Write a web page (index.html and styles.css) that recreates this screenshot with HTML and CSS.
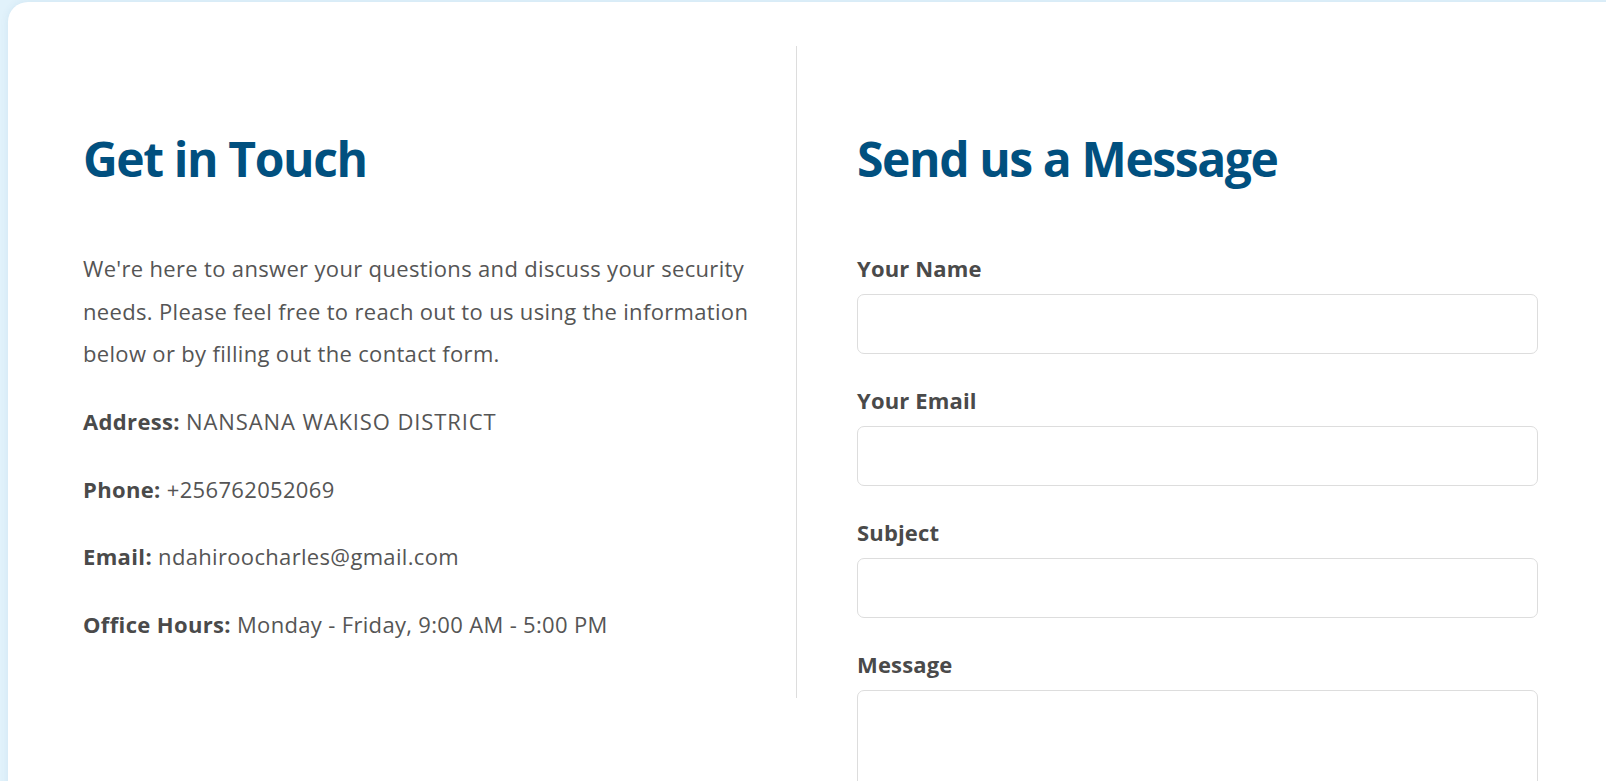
FILE: index.html
```html
<!DOCTYPE html>
<html lang="en">
<head>
<meta charset="utf-8">
<title>Contact Us</title>
<link rel="stylesheet" href="styles.css">
</head>
<body>
<section class="contact-card">
  <div class="contact-info">
    <h2 class="section-title">Get in Touch</h2>
    <p class="intro">We're here to answer your questions and discuss your security needs. Please feel free to reach out to us using the information below or by filling out the contact form.</p>
    <p class="info-line"><strong>Address:</strong> <span class="caps">NANSANA WAKISO DISTRICT</span></p>
    <p class="info-line"><strong>Phone:</strong> +256762052069</p>
    <p class="info-line"><strong>Email:</strong> ndahiroocharles@gmail.com</p>
    <p class="info-line"><strong>Office Hours:</strong> Monday - Friday, 9:00 AM - 5:00 PM</p>
  </div>
  <div class="contact-form">
    <h2 class="section-title form-title">Send us a Message</h2>
    <form class="form">
      <div class="form-group">
        <label class="form-label" for="name">Your Name</label>
        <input class="form-input" id="name" type="text">
      </div>
      <div class="form-group">
        <label class="form-label" for="email">Your Email</label>
        <input class="form-input" id="email" type="email">
      </div>
      <div class="form-group">
        <label class="form-label" for="subject">Subject</label>
        <input class="form-input" id="subject" type="text">
      </div>
      <div class="form-group">
        <label class="form-label" for="message">Message</label>
        <textarea class="form-input form-textarea" id="message"></textarea>
      </div>
    </form>
  </div>
</section>
</body>
</html>
```
FILE: styles.css
```css
html {
  overflow: hidden;
}
body {
  margin: 0;
  background: #e1f2fb;
  font-family: "Open Sans", "Noto Sans", sans-serif;
  color: #555555;
}
.contact-card {
  display: flex;
  align-items: flex-start;
  box-sizing: border-box;
  width: 1640px;
  min-height: 900px;
  margin: 2px 0 0 8px;
  padding: 44px 0 0 75px;
  background: #ffffff;
  border-radius: 20px;
  box-shadow: 0 0 8px rgba(0, 90, 140, 0.08);
}
.contact-info {
  flex: 0 0 714px;
  box-sizing: border-box;
  padding: 84px 34px 52px 0;
  border-right: 1px solid #dddddd;
}
.contact-form {
  flex: 0 0 681px;
  padding: 84px 0 0 60px;
}
.section-title {
  margin: 0 0 59.5px;
  font-size: 48px;
  line-height: 57.6px;
  font-weight: 700;
  letter-spacing: -1.4px;
  color: #01507f;
}
.form-title {
  margin-bottom: 64px;
}
.intro,
.info-line {
  margin: 0 0 25px;
  font-size: 22px;
  line-height: 42.67px;
  letter-spacing: 0.33px;
}
.info-line:last-child {
  margin-bottom: 0;
}
.info-line strong {
  font-weight: 700;
  color: #4a4a4a;
  letter-spacing: 0.35px;
}
.info-line .caps {
  letter-spacing: 0.9px;
}
.form-group {
  margin-bottom: 29.5px;
}
.form-label {
  display: block;
  margin-bottom: 10.5px;
  font-size: 22px;
  line-height: 32px;
  font-weight: 700;
  letter-spacing: 0.15px;
  color: #4a4a4a;
}
.form-input {
  display: block;
  box-sizing: border-box;
  width: 681px;
  height: 60px;
  margin: 0;
  padding: 12px 16px;
  border: 1px solid #dddddd;
  border-radius: 7px;
  background: #ffffff;
  font-family: inherit;
  font-size: 20px;
  color: #333333;
}
.form-textarea {
  height: 160px;
  resize: vertical;
}
```
